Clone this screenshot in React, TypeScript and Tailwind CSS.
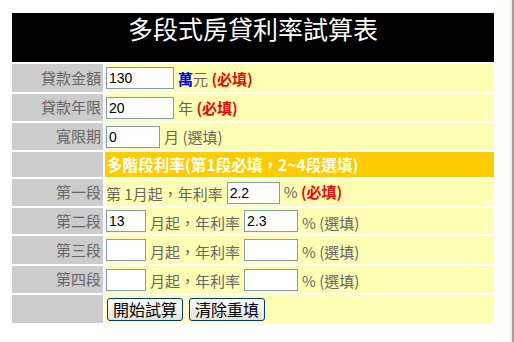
const font = { fontFamily: '"Noto Sans CJK TC", "Liberation Sans", sans-serif' };

function Field({ value = "", w }: { value?: string; w: string }) {
	return (
		<input
			readOnly
			value={value}
			className={`${w} h-[22px] border border-[#7f9db9] bg-white px-[2px] text-[14px] leading-none text-black outline-none`}
			style={{ fontFamily: '"Liberation Sans", sans-serif' }}
		/>
	);
}

function Row({ label, h, children }: { label: string; h: string; children: React.ReactNode }) {
	return (
		<div className={`flex gap-[2px] ${h}`}>
			<div className="w-[91px] bg-[#cccccc] flex items-center justify-end pr-[2px] text-[15px] text-[#666666]">
				{label}
			</div>
			<div className="flex-1 bg-[#ffffb3] flex items-center gap-[4px] pl-[1px] text-[15px] text-[#666666]">
				{children}
			</div>
		</div>
	);
}

const Req = () => <span className="font-bold text-[#ff0000]">(必填)</span>;
const Opt = () => <span>(選填)</span>;

function Btn({ label }: { label: string }) {
	return (
		<button className="h-[23px] w-[76px] rounded-[3px] border border-[#003c74] bg-gradient-to-b from-white to-[#e6e3d6] text-[16px] leading-none text-black">
			{label}
		</button>
	);
}

export default function App() {
	return (
		<div className="flex h-[342px] w-[514px] bg-white" style={font}>
			<div className="flex-1 pt-[13px] pl-[12px] pr-[15px]">
				<div className="flex flex-col gap-[2px] w-[482px]">
					<div className="h-[49px] bg-black text-center text-white text-[25px] leading-[30px]">
						多段式房貸利率試算表
					</div>
					<Row label="貸款金額" h="h-[28px]">
						<Field value="130" w="w-[68px]" />
						<span className="pt-[2px]">
							<span className="font-bold text-[#0000ff]">萬</span>元 <Req />
						</span>
					</Row>
					<Row label="貸款年限" h="h-[27px]">
						<Field value="20" w="w-[68px]" />
						<span className="pt-[2px]">
							年 <Req />
						</span>
					</Row>
					<Row label="寬限期" h="h-[27px]">
						<Field value="0" w="w-[54px]" />
						<span className="pt-[2px]">
							月 <Opt />
						</span>
					</Row>
					<div className="flex gap-[2px] h-[25px]">
						<div className="w-[91px] bg-[#cccccc]" />
						<div className="flex-1 bg-[#ffcc00] flex items-center pl-[2px] text-[15.6px] font-bold text-white">
							多階段利率(第1段必填，2~4段選填)
						</div>
					</div>
					<Row label="第一段" h="h-[27px]">
						<span className="pt-[4px]">第 1月起，年利率</span>
						<Field value="2.2" w="w-[53px]" />
						<span>
							% <Req />
						</span>
					</Row>
					<Row label="第二段" h="h-[26px]">
						<Field value="13" w="w-[40px]" />
						<span className="pt-[4px]">月起，年利率</span>
						<Field value="2.3" w="w-[54px]" />
						<span className="pt-[4px]">
							% <Opt />
						</span>
					</Row>
					<Row label="第三段" h="h-[28px]">
						<Field w="w-[40px]" />
						<span className="pt-[4px]">月起，年利率</span>
						<Field w="w-[54px]" />
						<span className="pt-[4px]">
							% <Opt />
						</span>
					</Row>
					<Row label="第四段" h="h-[27px]">
						<Field w="w-[40px]" />
						<span className="pt-[4px]">月起，年利率</span>
						<Field w="w-[54px]" />
						<span className="pt-[4px]">
							% <Opt />
						</span>
					</Row>
					<div className="flex gap-[2px] h-[28px]">
						<div className="w-[91px] bg-[#cccccc]" />
						<div className="w-[80px] bg-[#ffffb3] flex items-center pl-[2px]">
							<Btn label="開始試算" />
						</div>
						<div className="flex-1 bg-[#ffffb3] flex items-center pl-[2px]">
							<Btn label="清除重填" />
						</div>
					</div>
				</div>
			</div>
			<div className="w-[2px] bg-[#f1efe2]" />
			<div className="w-[2px] bg-[#a0a0a0]" />
		</div>
	);
}
